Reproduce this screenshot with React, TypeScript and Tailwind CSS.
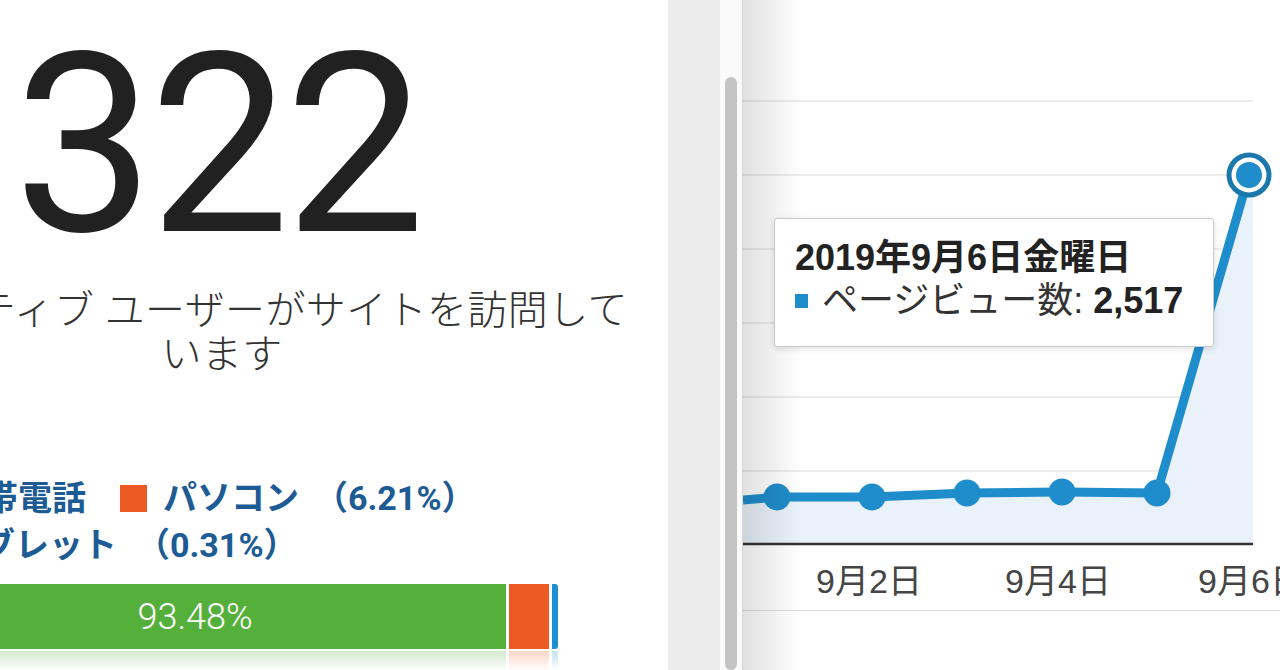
import React from "react";

const points: [number, number][] = [
  [0, 500],
  [34, 497],
  [129, 497],
  [224, 493],
  [319, 492],
  [414, 493],
  [506, 175],
];

const gridLines = [101, 175, 249, 323, 397, 471];

function RealtimeSummary() {
  return (
    <div className="w-[668px] h-full shrink-0 overflow-hidden bg-white">
      {/* big number + caption, centred on the (partly off-screen) panel */}
      <div className="-ml-[196px] w-[836px] pt-[21px] text-center">
        <div
          className="h-[250px] pr-[10px] text-[250px] leading-[250px] tracking-[-5px] text-[#212121]"
          style={{ fontFamily: "Roboto, 'Noto Sans CJK JP', sans-serif" }}
        >
          322
        </div>
        <p
          className="mt-[18px] text-[40px] leading-[44px] tracking-[0.4px] text-[#333]"
          style={{ fontFamily: "Roboto, 'Noto Sans CJK JP', sans-serif", fontWeight: 300 }}
        >
          人のアクティブ ユーザーがサイトを訪問しています
        </p>
      </div>

      {/* device legend */}
      <div
        className="mt-[98px] text-[34px] leading-[47px] font-bold text-[#1d5b95]"
        style={{ fontFamily: "Roboto, 'Noto Sans CJK JP', sans-serif" }}
      >
        <div className="-ml-[91px] flex items-center whitespace-nowrap">
          <span className="w-[27px] h-[27px] bg-[#55b03b]" />
          <span className="ml-[14px]">携帯電話</span>
          <span className="ml-[34px] w-[27px] h-[27px] bg-[#ee5a24]" />
          <span className="ml-[16px]">パソコン</span>
          <span className="ml-[15px]">（6.21%）</span>
        </div>
        <div className="-ml-[94px] flex items-center whitespace-nowrap">
          <span className="w-[27px] h-[27px] bg-[#1d8ecf]" />
          <span className="ml-[14px]">タブレット</span>
          <span className="ml-[19px]">（0.31%）</span>
        </div>
      </div>

      {/* stacked bar */}
      <div className="-ml-[116px] mt-[15px] flex h-[65px] w-[674px]">
        <div
          className="flex w-[622px] items-center justify-center bg-[#55b03b] text-[36px] text-white"
          style={{ fontFamily: "Roboto, sans-serif", fontWeight: 300 }}
        >
          93.48%
        </div>
        <div className="ml-[3px] w-[40px] bg-[#ee5a24]" />
        <div className="ml-[3px] w-[6px] rounded-r-[3px] bg-[#1d8ecf]" />
      </div>
      <div className="-ml-[116px] mt-[2px] flex h-[20px] w-[674px]">
        <div className="w-[622px] bg-linear-to-b from-[#d3e9cc] to-white" />
        <div className="ml-[3px] w-[40px] bg-linear-to-b from-[#fbd6c8] to-white" />
        <div className="ml-[3px] w-[6px] bg-linear-to-b from-[#c6e2f3] to-white" />
      </div>
    </div>
  );
}

function PageviewChart() {
  const line = points.map((p) => p.join(",")).join(" ");
  const area = `${line} 510,175 510,544 0,544`;
  return (
    <div className="relative flex-1 h-full overflow-hidden border-l border-[#d6d6d6] bg-white">
      <div className="h-[611px] border-b border-[#dedede]">
        <svg width="538" height="611" className="block">
          {gridLines.map((y) => (
            <line key={y} x1="0" x2="510" y1={y} y2={y} stroke="#ececec" strokeWidth="2" />
          ))}
          <polygon points={area} fill="#e9f2fa" />
          <line x1="0" x2="510" y1="544" y2="544" stroke="#333" strokeWidth="2.5" />
          <polyline
            points={line}
            fill="none"
            stroke="#1f8dcb"
            strokeWidth="9"
            strokeLinejoin="round"
          />
          {points.slice(1, 6).map(([x, y]) => (
            <circle key={x} cx={x} cy={y} r="13.5" fill="#1f8dcb" />
          ))}
          <circle cx="506" cy="175" r="20" fill="#fff" stroke="#1a78ad" strokeWidth="5" />
          <circle cx="506" cy="175" r="13" fill="#1f8dcb" />
          <g
            fontSize="34"
            fill="#454545"
            textAnchor="middle"
            style={{ fontFamily: "'Liberation Sans', 'Noto Sans CJK JP', sans-serif" }}
          >
            <text x="126" y="593">9月2日</text>
            <text x="315" y="593">9月4日</text>
            <text x="508" y="593">9月6日</text>
          </g>
        </svg>
      </div>

      {/* soft shadow cast by the drawer on the left */}
      <div className="pointer-events-none absolute inset-y-0 left-0 w-[60px] bg-linear-to-r from-black/12 to-transparent" />

      {/* hover tooltip */}
      <div
        className="absolute left-[31px] top-[218px] w-[440px] h-[129px] rounded-[3px] border border-[#c9c9c9] bg-white pl-[20px] pt-[17px] text-[36px] leading-[43px] text-[#222] shadow-[0_2px_6px_rgba(0,0,0,0.12)]"
        style={{ fontFamily: "'Liberation Sans', 'Noto Sans CJK JP', sans-serif" }}
      >
        <div className="font-bold whitespace-nowrap">2019年9月6日金曜日</div>
        <div className="flex items-center whitespace-nowrap">
          <span className="w-[13px] h-[14px] bg-[#1f8dcb]" />
          <span className="ml-[14px] text-[#333]">ページビュー数:</span>
          <span className="ml-[10px] font-bold">2,517</span>
        </div>
      </div>
    </div>
  );
}

export default function App() {
  return (
    <div className="flex h-[670px] w-[1280px] overflow-hidden bg-white">
      <RealtimeSummary />
      <div className="w-[52px] h-full shrink-0 bg-[#ececec]" />
      <div className="w-[22px] h-full shrink-0 bg-[#fafafa] pl-[5px] pt-[77px]">
        <div className="h-[593px] w-[12px] rounded-full bg-[#c4c4c4]" />
      </div>
      <PageviewChart />
    </div>
  );
}
